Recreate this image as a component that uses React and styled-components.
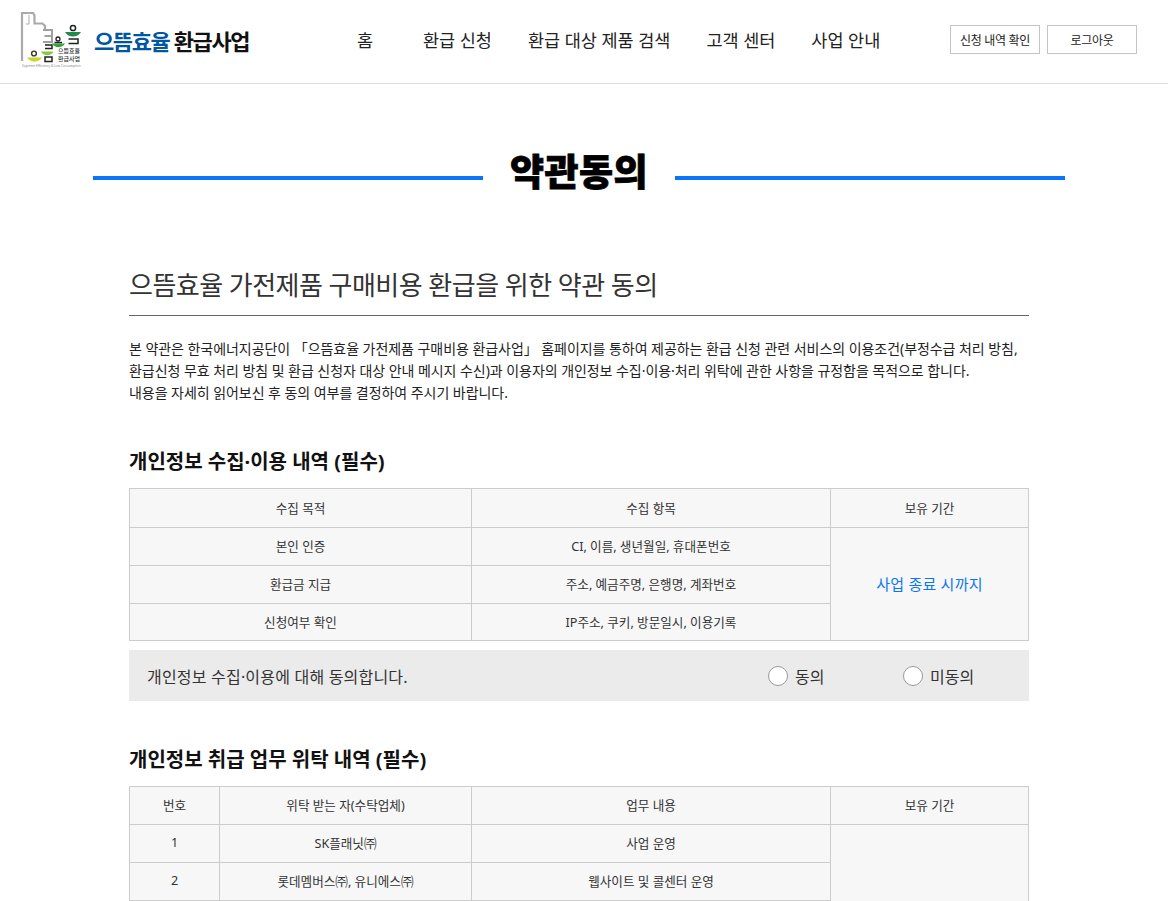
import React from 'react'
import styled, { createGlobalStyle } from 'styled-components'

const FONT = '"Noto Sans", "Noto Sans CJK KR", sans-serif'

const GlobalStyle = createGlobalStyle`
  html, body { margin: 0; padding: 0; background: #fff; }
  body {
    font-family: ${FONT};
    color: #222;
    overflow-x: hidden;
  }
  * { box-sizing: border-box; }
`

const Logo = () => (
  <svg width='64' height='60' viewBox='0 0 64 60'>
    <path d='M2 49V1H13L14.5 3V11.5H22.5L25 14V18' fill='none' stroke='#aaa' strokeWidth='2.2' />
    <path d='M9 3V12H6' fill='none' stroke='#aaa' strokeWidth='1' />
    <path d='M23 18H32V30H23M24.5 24H32' fill='none' stroke='#a0a0a0' strokeWidth='2' />
    <path d='M7 45.5C10 51 19 51 22 45.5Z' fill='#c9d72c' />
    <circle cx='14' cy='41.5' r='2.4' fill='none' stroke='#333' strokeWidth='1.4' />
    <path d='M21 39.5C23.5 44.5 31 44.5 33.5 39.5Z' fill='#8cc63f' />
    <path d='M25 33H32V36.5H25M25 45H32V49.5H25Z' fill='none' stroke='#222' strokeWidth='1.5' />
    <path d='M32 31.5C35 36.5 42 36.5 45 31.5Z' fill='#35a336' />
    <path d='M34.5 30.5H42' fill='none' stroke='#222' strokeWidth='1.5' />
    <circle cx='38' cy='27' r='2' fill='none' stroke='#222' strokeWidth='1.3' />
    <path d='M45 20C48.5 26 57.5 26 61 20Z' fill='#1f8a4c' />
    <circle cx='53' cy='16' r='2.6' fill='none' stroke='#222' strokeWidth='1.5' />
    <path d='M48.5 27H58V31.5H48.5' fill='none' stroke='#222' strokeWidth='1.5' />
  </svg>
)

const Header = styled.header`
  height: 84px;
  border-bottom: 1px solid #ddd;
  display: flex;
  align-items: center;
  padding: 0 31px 4px 20px;
`
const Brand = styled.a`
  display: flex;
  align-items: center;
  width: 330px;
  flex: none;
`
const LogoBox = styled.div`
  position: relative;
  width: 64px;
  height: 60px;
  margin: 4px 10px 0 0;
  svg { display: block; }
`
const LogoText = styled.span`
  position: absolute;
  left: ${p => p.$left || 38}px;
  top: ${p => p.$top}px;
  font-size: ${p => p.$size || 6}px;
  line-height: 7px;
  font-weight: 500;
  color: ${p => p.$color || '#333'};
  white-space: nowrap;
`
const BrandName = styled.strong`
  font-size: 22px;
  font-weight: 700;
  letter-spacing: -1.4px;
  color: #111;
  em { font-style: normal; color: #00569f; }
`
const Nav = styled.nav`
  display: flex;
  gap: 36px;
  flex: 1;
  a {
    font-size: 17.5px;
    font-weight: 400;
    color: #222;
    white-space: nowrap;
  }
`
const HomeLink = styled.a`
  width: 30px;
  margin-right: 7px;
  text-align: center;
`
const HeaderButtons = styled.div`
  display: flex;
  gap: 7px;
`
const HeaderButton = styled.button`
  width: 90px;
  height: 29px;
  padding: 0;
  background: #fff;
  border: 1px solid #c4c4c4;
  font: 400 12px ${FONT};
  letter-spacing: -0.3px;
  color: #222;
`
const PageTitle = styled.div`
  display: flex;
  align-items: center;
  gap: 27px;
  margin: 64px 103px 0 93px;
  height: 48px;
  h1 {
    margin: 0;
    font-size: 37px;
    line-height: 48px;
    font-weight: 900;
    letter-spacing: 0.5px;
    color: #000;
    -webkit-text-stroke: 0.8px #000;
    white-space: nowrap;
  }
`
const TitleLine = styled.span`
  flex: 1;
  height: 4px;
  margin-top: 11px;
  background: #0a75fb;
`
const Content = styled.main`
  width: 900px;
  margin: 73px 0 0 129px;
`
const SubTitle = styled.h2`
  margin: 0;
  height: 47px;
  border-bottom: 1px solid #666;
  font-size: 26px;
  line-height: 32px;
  font-weight: 400;
  color: #333;
  letter-spacing: -0.53px;
`
const Intro = styled.p`
  margin: 22px 0 0;
  font-size: 14px;
  line-height: 22px;
  color: #222;
  letter-spacing: -0.05px;
`
const SectionTitle = styled.h3`
  margin: ${p => p.$top}px 0 12px;
  font-size: 20px;
  line-height: 28px;
  font-weight: 700;
  color: #111;
`
const Table = styled.table`
  width: 899px;
  border-collapse: collapse;
  table-layout: fixed;
  background: #f7f7f7;
  th, td {
    border: 1px solid #ccc;
    font-size: 12.6px;
    font-weight: 400;
    color: #333;
    text-align: center;
    padding: 0 0 2px;
    height: 38px;
  }
  th { height: ${p => p.$headHeight}px; }
`
const LastRow = styled.tr`
  td { height: 37px; }
`
const Period = styled.td`
  && {
    font-size: 15px;
    color: #0a75fb;
    letter-spacing: 0.22px;
  }
`
const AgreeBar = styled.div`
  height: 51px;
  margin-top: 9px;
  background: #ebebeb;
  display: flex;
  align-items: center;
  padding: 0 54px 0 18px;
  font-size: 16px;
  color: #333;
`
const AgreeText = styled.span`
  flex: 1;
  letter-spacing: 0.2px;
`
const RadioLabel = styled.label`
  display: flex;
  align-items: center;
  gap: 7px;
  width: ${p => p.$width}px;
`
const Radio = styled.input.attrs({ type: 'radio' })`
  appearance: none;
  width: 20px;
  height: 20px;
  margin: 0;
  background: #fff;
  border: 1px solid #999;
  border-radius: 50%;
`

const App = () => {
  return (
    <>
      <GlobalStyle />
      <Header>
        <Brand>
          <LogoBox>
            <Logo />
            <LogoText $top={36}>으뜸효율</LogoText>
            <LogoText $top={44}>환급사업</LogoText>
            <LogoText $top={51} $left={2} $size={3.1} $color='#999'>Supreme Efficiency &amp; Low Consumption</LogoText>
          </LogoBox>
          <BrandName><em>으뜸효율</em> 환급사업</BrandName>
        </Brand>
        <Nav>
          <HomeLink>홈</HomeLink>
          <a>환급 신청</a>
          <a>환급 대상 제품 검색</a>
          <a>고객 센터</a>
          <a>사업 안내</a>
        </Nav>
        <HeaderButtons>
          <HeaderButton>신청 내역 확인</HeaderButton>
          <HeaderButton>로그아웃</HeaderButton>
        </HeaderButtons>
      </Header>

      <PageTitle>
        <TitleLine />
        <h1>약관동의</h1>
        <TitleLine />
      </PageTitle>

      <Content>
        <SubTitle>으뜸효율 가전제품 구매비용 환급을 위한 약관 동의</SubTitle>
        <Intro>
          본 약관은 한국에너지공단이 「으뜸효율 가전제품 구매비용 환급사업」 홈페이지를 통하여 제공하는 환급 신청 관련 서비스의 이용조건(부정수급 처리 방침,<br />
          환급신청 무효 처리 방침 및 환급 신청자 대상 안내 메시지 수신)과 이용자의 개인정보 수집·이용·처리 위탁에 관한 사항을 규정함을 목적으로 합니다.<br />
          내용을 자세히 읽어보신 후 동의 여부를 결정하여 주시기 바랍니다.
        </Intro>

        <SectionTitle $top={44}>개인정보 수집·이용 내역 (필수)</SectionTitle>
        <Table $headHeight={39}>
          <colgroup>
            <col width='342' />
            <col width='359' />
            <col width='198' />
          </colgroup>
          <thead>
            <tr><th>수집 목적</th><th>수집 항목</th><th>보유 기간</th></tr>
          </thead>
          <tbody>
            <tr><td>본인 인증</td><td>CI, 이름, 생년월일, 휴대폰번호</td><Period rowSpan={3}>사업 종료 시까지</Period></tr>
            <tr><td>환급금 지급</td><td>주소, 예금주명, 은행명, 계좌번호</td></tr>
            <LastRow><td>신청여부 확인</td><td>IP주소, 쿠키, 방문일시, 이용기록</td></LastRow>
          </tbody>
        </Table>
        <AgreeBar>
          <AgreeText>개인정보 수집·이용에 대해 동의합니다.</AgreeText>
          <RadioLabel $width={135}><Radio name='a1' />동의</RadioLabel>
          <RadioLabel $width={72}><Radio name='a1' />미동의</RadioLabel>
        </AgreeBar>

        <SectionTitle $top={45}>개인정보 취급 업무 위탁 내역 (필수)</SectionTitle>
        <Table $headHeight={38}>
          <colgroup>
            <col width='90' />
            <col width='252' />
            <col width='359' />
            <col width='198' />
          </colgroup>
          <thead>
            <tr><th>번호</th><th>위탁 받는 자(수탁업체)</th><th>업무 내용</th><th>보유 기간</th></tr>
          </thead>
          <tbody>
            <tr><td>1</td><td>SK플래닛㈜</td><td>사업 운영</td><td rowSpan={3} /></tr>
            <tr><td>2</td><td>롯데멤버스㈜, 유니에스㈜</td><td>웹사이트 및 콜센터 운영</td></tr>
            <tr><td /><td /><td /></tr>
          </tbody>
        </Table>
      </Content>
    </>
  )
}

export default App
